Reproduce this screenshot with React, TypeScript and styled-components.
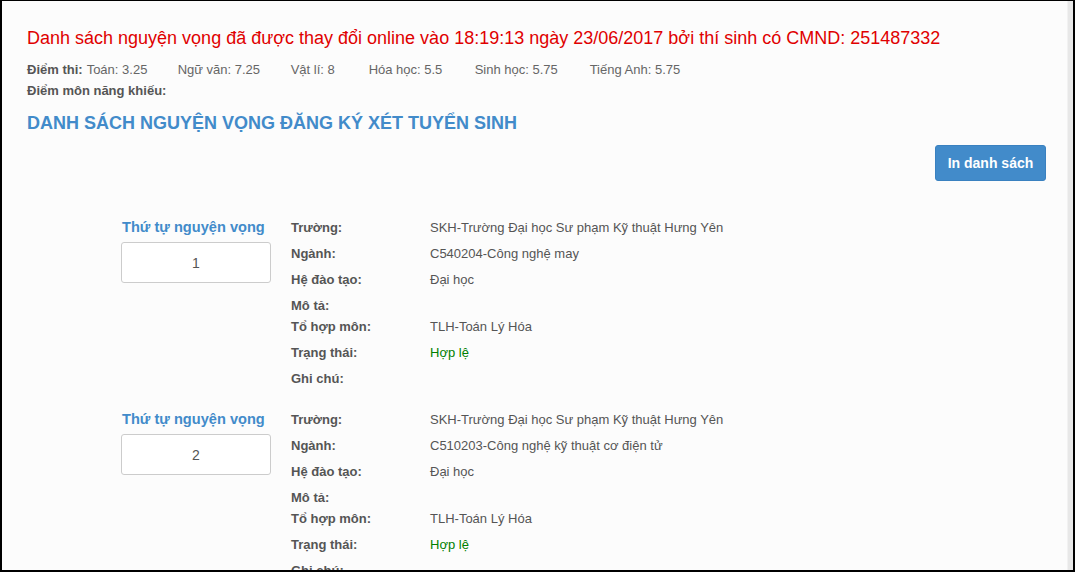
import React from "react";
import styled, { createGlobalStyle } from "styled-components";

const GlobalStyle = createGlobalStyle`
  html, body {
    margin: 0;
    padding: 0;
    background: #ffffff;
  }
  * {
    box-sizing: border-box;
  }
`;

// width = distance from the start of one score to the start of the next
type Score = { name: string; value: string; width?: number };

const SCORES: Score[] = [
  { name: "Toán", value: "3.25", width: 91 },
  { name: "Ngữ văn", value: "7.25", width: 113 },
  { name: "Vật lí", value: "8", width: 78 },
  { name: "Hóa học", value: "5.5", width: 106 },
  { name: "Sinh học", value: "5.75", width: 115 },
  { name: "Tiếng Anh", value: "5.75" },
];

type Wish = {
  order: number;
  school: string;
  major: string;
  level: string;
  desc: string;
  combo: string;
  status: string;
  note: string;
};

const WISHES: Wish[] = [
  {
    order: 1,
    school: "SKH-Trường Đại học Sư phạm Kỹ thuật Hưng Yên",
    major: "C540204-Công nghệ may",
    level: "Đại học",
    desc: "",
    combo: "TLH-Toán Lý Hóa",
    status: "Hợp lệ",
    note: "",
  },
  {
    order: 2,
    school: "SKH-Trường Đại học Sư phạm Kỹ thuật Hưng Yên",
    major: "C510203-Công nghệ kỹ thuật cơ điện tử",
    level: "Đại học",
    desc: "",
    combo: "TLH-Toán Lý Hóa",
    status: "Hợp lệ",
    note: "",
  },
];

const App: React.FC = () => {
  return (
    <Frame>
      <GlobalStyle />
      <Content>
        <ChangeNotice>
          Danh sách nguyện vọng đã được thay đổi online vào 18:19:13 ngày
          23/06/2017 bởi thí sinh có CMND: 251487332
        </ChangeNotice>

        <ScoreLine>
          <Strong>Điểm thi:</Strong>
          <Scores>
            {SCORES.map((s) => (
              <ScoreItem key={s.name} $width={s.width}>
                {s.name}: {s.value}
              </ScoreItem>
            ))}
          </Scores>
        </ScoreLine>
        <ScoreLine>
          <Strong>Điểm môn năng khiếu:</Strong>
        </ScoreLine>

        <Heading>DANH SÁCH NGUYỆN VỌNG ĐĂNG KÝ XÉT TUYỂN SINH</Heading>

        <Toolbar>
          <PrintButton type="button">In danh sách</PrintButton>
        </Toolbar>

        <WishList>
          {WISHES.map((w) => (
            <WishRow key={w.order}>
              <OrderCol>
                <OrderLabel>Thứ tự nguyện vọng</OrderLabel>
                <OrderBox>{w.order}</OrderBox>
              </OrderCol>
              <Details>
                <Field label="Trường:" value={w.school} />
                <Field label="Ngành:" value={w.major} />
                <Field label="Hệ đào tạo:" value={w.level} />
                <Field label="Mô tả:" value={w.desc} />
                <Field label="Tổ hợp môn:" value={w.combo} />
                <Field label="Trạng thái:" value={w.status} ok />
                <Field label="Ghi chú:" value={w.note} />
              </Details>
            </WishRow>
          ))}
        </WishList>
      </Content>
      <Scrollbar />
    </Frame>
  );
};

const Field: React.FC<{ label: string; value: string; ok?: boolean }> = ({
  label,
  value,
  ok,
}) => (
  <FieldRow $empty={!value}>
    <FieldLabel>{label}</FieldLabel>
    <FieldValue $ok={!!ok}>{value}</FieldValue>
  </FieldRow>
);

const Frame = styled.div`
  width: 1075px;
  height: 572px;
  border-top: 1px solid #000;
  border-left: 2px solid #000;
  border-right: 2px solid #000;
  border-bottom: 2px solid #000;
  background: #fcfcfc;
  display: flex;
  overflow: hidden;
  font-family: "Liberation Sans", Arial, sans-serif;
`;

const Content = styled.div`
  flex: 1;
  padding: 26px 21px 0 25px;
  overflow: hidden;
`;

const Scrollbar = styled.div`
  width: 6px;
  background: #e8e8e8;
  border-left: 1px solid #f2f2f2;
`;

const ChangeNotice = styled.div`
  color: #e00000;
  font-size: 18px;
  line-height: 22px;
  margin-bottom: 10px;
`;

const ScoreLine = styled.div`
  display: flex;
  line-height: 21px;
`;

const Strong = styled.span`
  font-weight: bold;
  font-size: 13px;
  color: #555;
`;

const Scores = styled.div`
  display: flex;
  margin-left: 4px;
  font-size: 13px;
  color: #666;
`;

const ScoreItem = styled.span<{ $width?: number }>`
  width: ${(p) => (p.$width ? `${p.$width}px` : "auto")};
  white-space: nowrap;
`;

const Heading = styled.div`
  margin-top: 10px;
  color: #428bca;
  font-size: 18px;
  font-weight: bold;
  line-height: 24px;
`;

const Toolbar = styled.div`
  display: flex;
  justify-content: flex-end;
  margin-top: 10px;
`;

const PrintButton = styled.button`
  width: 111px;
  height: 36px;
  border: 1px solid #3a81c0;
  border-radius: 3px;
  background: #428bca;
  color: #fff;
  font-family: "Liberation Sans", Arial, sans-serif;
  font-size: 14px;
  font-weight: bold;
  cursor: pointer;
`;

const WishList = styled.div`
  display: flex;
  flex-direction: column;
  gap: 20px;
  margin-top: 36px;
  padding-left: 94px;
`;

const WishRow = styled.div`
  display: flex;
  gap: 20px;
`;

const OrderCol = styled.div`
  width: 150px;
  display: flex;
  flex-direction: column;
`;

const OrderLabel = styled.div`
  color: #428bca;
  font-weight: bold;
  font-size: 14.6px;
  line-height: 20px;
  margin-bottom: 5px;
  padding-left: 1px;
  white-space: nowrap;
`;

const OrderBox = styled.div`
  width: 150px;
  height: 41px;
  border: 1px solid #ccc;
  border-radius: 3px;
  background: #fff;
  display: flex;
  align-items: center;
  justify-content: center;
  color: #555;
  font-size: 14px;
`;

const Details = styled.div`
  display: flex;
  flex-direction: column;
`;

const FieldRow = styled.div<{ $empty: boolean }>`
  display: flex;
  line-height: 21px;
  margin-bottom: ${(p) => (p.$empty ? 0 : 5)}px;
  font-size: 13px;
`;

const FieldLabel = styled.div`
  width: 139px;
  font-weight: bold;
  color: #555;
`;

const FieldValue = styled.div<{ $ok: boolean }>`
  color: ${(p) => (p.$ok ? "#008000" : "#555")};
`;

export default App;
